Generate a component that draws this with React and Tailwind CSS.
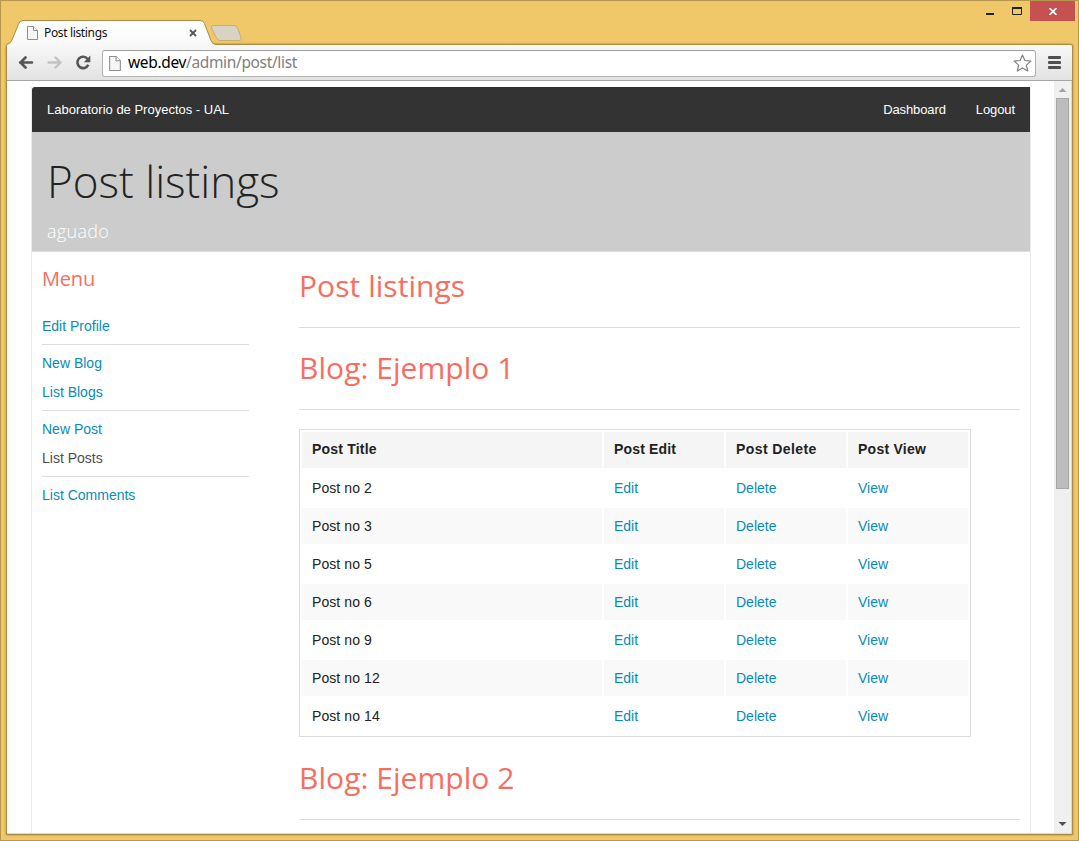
import React from "react";

const posts = [2, 3, 5, 6, 9, 12, 14];

function PageIcon({ className }) {
  return (
    <svg className={className} viewBox="0 0 11 14" fill="none">
      <path d="M.5.5h6l4 4v9H.5z" fill="#f6f6f6" stroke="#8f8f8f" />
      <path d="M6.5.5v4h4" fill="#fff" stroke="#8f8f8f" />
    </svg>
  );
}

function TitleBar() {
  return (
    <div className="relative flex h-[43px] shrink-0 items-start">
      <svg className="absolute -left-px -top-px" width="260" height="46" viewBox="0 0 260 46">
        <defs>
          <linearGradient id="tab" x1="0" y1="0" x2="0" y2="1">
            <stop offset="0" stopColor="#ffffff" />
            <stop offset="1" stopColor="#f8f8f8" />
          </linearGradient>
        </defs>
        <path d="M7 46V44.500Q10.500 43.500 12 40L18.500 24Q19.800 20.500 23 20.500H200Q203.200 20.500 204.500 23.500L211 40.500Q212.300 44.500 216 44.500V46Z" fill="url(#tab)" />
        <path d="M7 44.500Q10.500 43.500 12 40L18.500 24Q19.800 20.500 23 20.500H200Q203.200 20.500 204.500 23.500L211 40.500Q212.300 44.500 216 44.500" fill="none" stroke="#a98c47" />
        <path d="M213 25.500H234Q236.500 25.500 237.500 28L241 37.500Q242 40.500 239 40.500H220Q217.500 40.500 216.500 38L211.500 28Q210.500 25.500 213 25.500Z" fill="#d9d3c5" stroke="#c9ad6b" />
      </svg>
      <div className="relative ml-[26px] mt-[21px] flex h-[22px] w-[170px] items-center">
        <PageIcon className="h-[14px] w-[11px]" />
        <span className="ml-[6px] whitespace-nowrap font-['Noto_Sans','Open_Sans',sans-serif] text-[12px] leading-[22px] tracking-[-0.350px] text-[#111]">Post listings</span>
        <svg className="ml-auto" width="8" height="8" viewBox="0 0 8 8">
          <path d="M1 1l6 6M7 1L1 7" stroke="#555" strokeWidth="1.800" />
        </svg>
      </div>
      <div className="ml-auto mr-[3px] flex">
        <svg width="44" height="20" viewBox="0 0 44 20">
          <path d="M0 12h8v2H0z" fill="#222" />
          <path d="M26.500 6.500h9v7h-9z" fill="none" stroke="#222" />
          <path d="M26 6h10v2H26z" fill="#222" />
        </svg>
        <div className="flex h-5 w-[45px] items-center justify-center bg-[#c75050]">
          <svg width="8" height="7" viewBox="0 0 8 7">
            <path d="M.5 0l7 7M7.500 0l-7 7" stroke="#fff" strokeWidth="1.700" />
          </svg>
        </div>
      </div>
    </div>
  );
}

function Toolbar() {
  return (
    <div className="flex h-[36px] shrink-0 items-center border-b border-[#a6a6a6] bg-linear-to-b from-[#f8f8f8] to-[#e2e2e2]">
      <svg className="ml-[11px]" width="16" height="14" viewBox="0 0 16 14">
        <path d="M14 6.500H2M7.500 1.500l-5 5 5 5" fill="none" stroke="#555" strokeWidth="2.600" strokeLinecap="round" />
      </svg>
      <svg className="ml-[13px]" width="16" height="14" viewBox="0 0 16 14">
        <path d="M1.500 6.500h12M8.500 1.500l5 5-5 5" fill="none" stroke="#c2c2c2" strokeWidth="2.300" strokeLinecap="round" />
      </svg>
      <svg className="ml-[12px]" width="16" height="16" viewBox="0 0 16 16">
        <path d="M12.800 4.200A5.700 5.700 0 1 0 13.300 9.800" fill="none" stroke="#555" strokeWidth="2.600" />
        <path d="M15.300 .5v6.700H8.800z" fill="#555" />
      </svg>
      <div className="ml-[11px] mt-px flex h-[27px] w-[934px] items-center rounded-[3px] border border-[#b3b3b3] border-t-[#a0a0a0] bg-white">
        <PageIcon className="ml-[6px] h-[15px] w-[12px]" />
        <div className="-mt-[2px] ml-[7px] whitespace-nowrap font-['Noto_Sans','Open_Sans',sans-serif] text-[15.500px] leading-[24px] tracking-[-0.350px] text-[#808080]">
          <span className="text-black">web.dev</span>/admin/post/list
        </div>
        <svg className="ml-auto mr-[3px]" width="19" height="18" viewBox="0 0 19 18">
          <path d="M9.500 1l2.400 5.500 6 .6-4.500 4 1.300 5.900-5.200-3.100L4.300 17l1.300-5.900-4.500-4 6-.6z" fill="#fff" stroke="#808080" strokeWidth="1.200" strokeLinejoin="round" />
        </svg>
      </div>
      <div className="ml-3 flex flex-col gap-[2px]">
        <div className="h-[3px] w-[13px] rounded-[1px] bg-[#505050]" />
        <div className="h-[3px] w-[13px] rounded-[1px] bg-[#505050]" />
        <div className="h-[3px] w-[13px] rounded-[1px] bg-[#505050]" />
      </div>
    </div>
  );
}

function Link({ children, active }) {
  return (
    <a className={active ? "block h-[29px] leading-[31px] text-[#4d4d4d]" : "block h-[29px] leading-[31px] text-[#078bb9]"}>{children}</a>
  );
}

function Divider() {
  return <hr className="mb-[3px] mt-[4px] border-[#ddd]" />;
}

function Heading({ children }) {
  return (
    <>
      <h2 className="mt-5 h-[41px] whitespace-nowrap font-['Open_Sans',sans-serif] text-[30px] font-normal leading-[39px] tracking-[0.050px] text-[#f66e61]">{children}</h2>
      <hr className="mt-5 border-[#ddd]" />
    </>
  );
}

function PostTable() {
  return (
    <table className="mb-[21px] mt-[19px] h-[308px] w-[672px] table-fixed border-separate border-spacing-[2px] border border-[#ddd] text-left text-[#222]">
      <thead>
        <tr className="h-9 bg-[#f5f5f5]">
          <th className="w-[300px] px-[10px] pb-[2px] pt-0 tracking-[0.200px]">Post Title</th>
          <th className="px-[10px] pb-[2px] pt-0 tracking-[0.150px]">Post Edit</th>
          <th className="px-[10px] pb-[2px] pt-0 tracking-[0.400px]">Post Delete</th>
          <th className="px-[10px] pb-[2px] pt-0 tracking-[0.250px]">Post View</th>
        </tr>
      </thead>
      <tbody>
        {posts.map((n) => (
          <tr key={n} className="h-9 even:bg-[#f9f9f9]">
            <td className="px-[10px] py-0 tracking-[0.080px]">Post no {n}</td>
            <td className="px-[10px] py-0 text-[#078bb9]">Edit</td>
            <td className="px-[10px] py-0 text-[#078bb9]">Delete</td>
            <td className="px-[10px] py-0 text-[#078bb9]">View</td>
          </tr>
        ))}
      </tbody>
    </table>
  );
}

function Site() {
  return (
    <div className="ml-[24px] mt-[6px] flex h-[900px] w-[1000px] flex-col border-x border-[#ececec] font-['Liberation_Sans',Arial,sans-serif] text-[14px]">
      <nav className="flex h-[45px] shrink-0 items-center rounded-tl-[3px] bg-[#333] px-[15px] text-[13px] text-white">
        <span>Laboratorio de Proyectos - UAL</span>
        <span className="ml-auto tracking-[-0.100px]">Dashboard</span>
        <span className="ml-[30px] tracking-[-0.100px]">Logout</span>
      </nav>
      <header className="h-[120px] shrink-0 border-b border-[#ddd] bg-[#ccc] px-[15px] font-['Open_Sans',sans-serif] font-light">
        <h1 className="h-[80px] pt-[18px] text-[44px] leading-[62px] text-[#222]">Post listings</h1>
        <p className="text-[18px] leading-[38px] tracking-[0.300px] text-white">aguado</p>
      </header>
      <div className="flex px-[10px]">
        <aside className="w-[207px]">
          <h3 className="mb-[18px] mt-[13px] h-[28px] font-['Open_Sans',sans-serif] text-[20px] font-normal leading-[28px] tracking-[-0.200px] text-[#f66e61]">Menu</h3>
          <Link>Edit Profile</Link>
          <Divider />
          <Link>New Blog</Link>
          <Link>List Blogs</Link>
          <Divider />
          <Link>New Post</Link>
          <Link active>List Posts</Link>
          <Divider />
          <Link>List Comments</Link>
        </aside>
        <main className="-mt-[6px] ml-[50px] w-[721px]">
          <Heading>Post listings</Heading>
          <Heading>Blog: Ejemplo 1</Heading>
          <PostTable />
          <Heading>Blog: Ejemplo 2</Heading>
        </main>
      </div>
    </div>
  );
}

function Scrollbar() {
  return (
    <div className="flex w-[17px] shrink-0 flex-col items-center bg-[#f0f0f0]">
      <svg className="shrink-0" width="17" height="17" viewBox="0 0 17 17">
        <path d="M8.500 7l4 4h-8z" fill="#a3a3a3" />
      </svg>
      <div className="-ml-px h-[391px] w-[13px] border border-[#a8a8a8] bg-[#bcbcbc]" />
      <svg className="mt-auto shrink-0" width="17" height="17" viewBox="0 0 17 17">
        <path d="M4.500 6h8l-4 4z" fill="#505050" />
      </svg>
    </div>
  );
}

export default function App() {
  return (
    <div className="flex h-[841px] w-[1079px] flex-col overflow-hidden border border-[#b5974f] bg-[#f0c869]">
      <TitleBar />
      <div className="mx-[5px] flex h-[791px] flex-col overflow-hidden rounded-t-[3px] border border-[#a98c47] bg-white shadow-[0_0_2px_#8a7030]">
        <Toolbar />
        <div className="flex min-h-0 flex-1 border-b border-r border-[#d8d8d8]">
          <div className="min-w-0 flex-1 overflow-hidden">
            <Site />
          </div>
          <Scrollbar />
        </div>
      </div>
    </div>
  );
}
